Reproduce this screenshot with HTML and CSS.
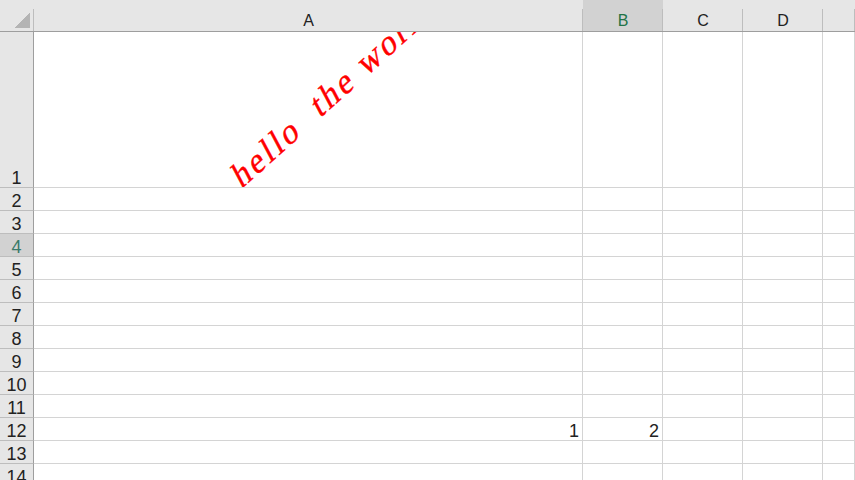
FILE: index.html
```html
<!DOCTYPE html>
<html lang="en">
  <head>
    <meta charset="UTF-8" />
    <title>Sheet1</title>
    <link rel="stylesheet" href="styles.css">
  </head>
  <body>
    <div class="sheet" id="sheet">
      <div class="corner"><span class="corner-mark"></span></div>
      <div class="col-head">A</div>
      <div class="col-head active">B</div>
      <div class="col-head">C</div>
      <div class="col-head">D</div>
      <div class="col-head"></div>
    </div>

    <script>
      const sheet = document.getElementById("sheet");
      const values = { "1-A": "hello  the world", "12-A": "1", "12-B": "2" };
      const cols = ["A", "B", "C", "D", "E"];

      for (let r = 1; r <= 14; r++) {
        const head = document.createElement("div");
        head.className = r === 4 ? "row-head active" : "row-head";
        head.textContent = r;
        sheet.appendChild(head);

        cols.forEach((c) => {
          const cell = document.createElement("div");
          cell.className = "cell";
          const v = values[`${r}-${c}`];
          if (r === 1 && v) {
            cell.classList.add("tall");
            const span = document.createElement("span");
            span.className = "rotated";
            span.textContent = v;
            cell.appendChild(span);
          } else if (v) {
            cell.classList.add("num");
            cell.textContent = v;
          }
          sheet.appendChild(cell);
        });
      }
    </script>
  </body>
</html>
```

FILE: styles.css
```css
* {
  box-sizing: border-box;
}

html,
body {
  margin: 0;
  padding: 0;
  background: #fff;
  overflow: hidden;
  height: 480px;
}

.sheet {
  display: grid;
  grid-template-columns: 34px 549px 80px 80px 80px 1fr;
  grid-template-rows: 32px 156px repeat(13, 23px);
  font-family: "Liberation Sans", Arial, sans-serif;
  color: #222;
}

.corner {
  background: linear-gradient(#bdbdbd, #bdbdbd) right 9px / 1px 22px no-repeat,
    #e6e6e6;
  border-bottom: 1px solid #9e9e9e;
  padding: 13px 0 0 15px;
}

.corner-mark {
  display: block;
  width: 15px;
  height: 15px;
  background: linear-gradient(to bottom right, transparent 50%, #b4b4b4 50%);
}

.col-head {
  background: linear-gradient(#bdbdbd, #bdbdbd) right 9px / 1px 22px no-repeat,
    #e6e6e6;
  border-bottom: 1px solid #9e9e9e;
  display: flex;
  align-items: center;
  justify-content: center;
  padding-top: 11px;
  font-size: 16px;
}

.col-head.active {
  background-color: #d2d2d2;
  color: #217346;
}

.row-head {
  background: #e6e6e6;
  border-right: 1px solid #9e9e9e;
  border-bottom: 1px solid #bdbdbd;
  display: flex;
  align-items: flex-end;
  justify-content: center;
  font-size: 18px;
  line-height: 18px;
  padding-bottom: 0;
}

.row-head.active {
  background: #d2d2d2;
  color: #3a7a6a;
}

.cell {
  border-right: 1px solid #d4d4d4;
  border-bottom: 1px solid #d4d4d4;
}

.cell.num {
  display: flex;
  align-items: flex-end;
  justify-content: flex-end;
  font-size: 18px;
  line-height: 18px;
  padding: 0 3px 0 0;
}

.cell.tall {
  position: relative;
  overflow: hidden;
}

.rotated {
  position: absolute;
  left: 210px;
  bottom: -8px;
  white-space: pre;
  font-family: "Liberation Serif", "Times New Roman", serif;
  font-size: 34px;
  line-height: 34px;
  letter-spacing: 3px;
  color: #ff0000;
  -webkit-text-stroke: 0.4px #ff0000;
  transform-origin: left bottom;
  transform: rotate(-42deg) skewX(-14deg);
}
```
